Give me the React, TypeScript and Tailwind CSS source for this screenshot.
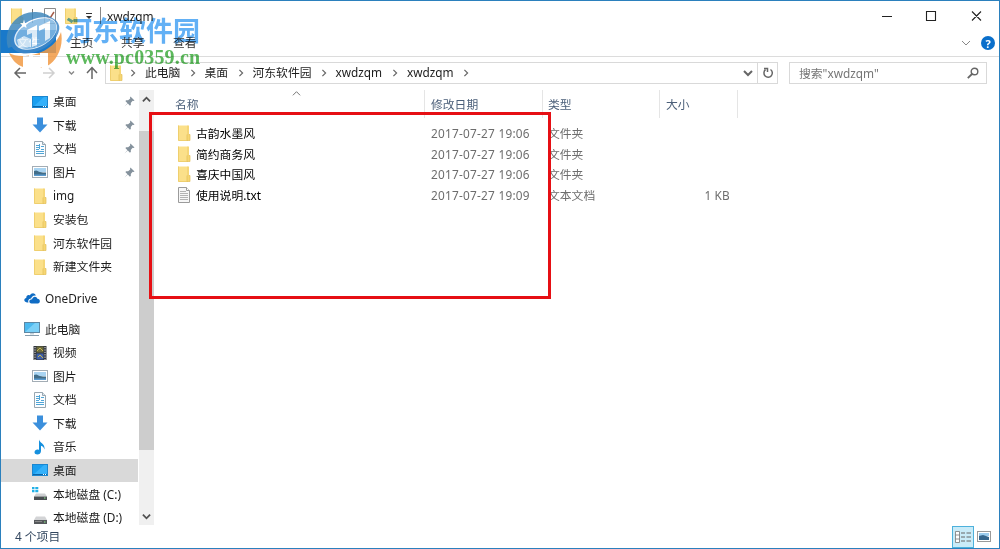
import type { ReactNode } from "react";

type IconName =
  | "desktop"
  | "download"
  | "document"
  | "picture"
  | "folder"
  | "onedrive"
  | "pc"
  | "video"
  | "music"
  | "diskC"
  | "diskD"
  | "text";

const icons: Record<IconName, ReactNode> = {
  desktop: (
    <>
      <rect x="0.5" y="2.5" width="15" height="11" fill="#1a9ff0" stroke="#1c86cf" />
      <path d="M1 13 12 3h3v10z" fill="#35b1fa" />
      <path d="M1 12.5h14" stroke="#0b65a8" />
      <path d="M11 12.5h1m1 0h1" stroke="#fff" />
    </>
  ),
  download: <path d="M5 .5h6v7h4.500L8 15.500.5 7.500H5z" fill="#3b8fdc" />,
  document: (
    <>
      <path d="M2.500.5h8l3 3v12h-11z" fill="#fbfdff" stroke="#98a6b0" />
      <path d="M10.500.5v3h3" fill="#dfe8ee" stroke="#98a6b0" />
      <path d="M4 4.500h3m2 1h3M4 6.500h4M4 8.500h3m2 0h3M4 10.500h8M4 12.500h8M7.500 3v5" stroke="#4fa5d6" />
    </>
  ),
  picture: (
    <>
      <rect x="0.5" y="2.5" width="15" height="11" fill="#fff" stroke="#a3adb5" />
      <path d="M2 4h12v4H2z" fill="#a9d4f2" />
      <path d="M2 7c3-1.500 4 .5 6 1s4 .5 6 .5V11H2z" fill="#426e8a" />
      <path d="M2 10.500h12V12H2z" fill="#5a9bd0" />
    </>
  ),
  folder: (
    <>
      <path d="M2 .5h9.500v15H2z" fill="#fbe08a" />
      <path d="M2.500.5v15h9" fill="none" stroke="#efcf6e" />
      <path d="M11 9.500h3v6h-3z" fill="#f6d673" stroke="#e3bf58" strokeWidth="0.700" />
      <path d="M11 .5h2v9h-2z" fill="#f5d678" />
    </>
  ),
  onedrive: (
    <>
      <path
        d="M4.500 12.500H3C-.5 12-.5 8.500 2.300 8 2 5.500 4.300 4.500 5.800 5.400 7.500 2 11.300 2.800 11.900 5.600 9 5.200 7.500 7 7.200 8.500 5 8.500 3.500 10.500 4.500 12.500z"
        fill="#0f6cc4"
      />
      <path
        d="M7.500 13.500c-3-.3-3-4.200.6-4.200.5-3.200 4.600-3.400 5.300-.5 3.200.2 3.200 4.400.4 4.700z"
        fill="#0f6cc4"
      />
    </>
  ),
  pc: (
    <>
      <rect x="0.5" y="1.500" width="15" height="10" fill="#4cb9ef" stroke="#5d87a3" />
      <path d="M1 11 11 2h4v9z" fill="#7bd0f7" />
      <path d="M6 12h4v1.500H6z" fill="#c3d0d8" />
      <path d="M1 14.500h14" stroke="#879cab" />
    </>
  ),
  video: (
    <>
      <path d="M1.500 1h13v14h-13z" fill="#30343b" />
      <path d="M4.500 1.500h7v6h-7z" fill="#6b6a3e" />
      <path d="M4.500 8.500h7v6h-7z" fill="#4060a8" />
      <path d="M5 6l3-3 3 3M6 12l2-2 3 3" fill="none" stroke="#c8b64f" />
      <path d="M3 2v13M13 2v13" stroke="#e7e9ec" strokeDasharray="1.200 1.200" />
    </>
  ),
  music: (
    <path
      d="M7 .5c.5 3.500 6.300 4 5.500 10-.5-2-1.800-3.500-3.500-3.800V12c0 4.600-6.700 4.400-6.500 1.200.2-2.400 2.700-3.200 4.500-2.200z"
      fill="#1590de"
    />
  ),
  diskC: (
    <>
      <path d="M0 1h2.500v2.300H0zM3.300 1h3v2.300h-3zM0 4h2.500v2.300H0zM3.300 4h3v2.300h-3z" fill="#22b0e6" />
      <path d="M4 7.500h9l2 3H2z" fill="#cdcfd1" />
      <path d="M2 10.500h13v3.500H2z" fill="#4a4e52" />
      <path d="M12 12h1.500" stroke="#8bea8b" />
    </>
  ),
  diskD: (
    <>
      <path d="M4 6.500h9l2 3.500H2z" fill="#d3d4d6" />
      <path d="M2 10h13v4H2z" fill="#55585b" />
      <path d="M3 11.500h7" stroke="#888" />
      <path d="M12 12h1.500" stroke="#8bea8b" />
    </>
  ),
  text: (
    <>
      <path d="M2.500.5h8l3 3v12h-11z" fill="#f7f7f7" stroke="#9b9b9b" />
      <path d="M10.500.5v3h3" fill="#fff" stroke="#9b9b9b" />
      <path d="M4 4.500h6M4 6.500h8M4 8.500h8M4 10.500h8M4 12.500h8" stroke="#b3b3b3" />
    </>
  ),
};

function Icon({ name }: { name: IconName }) {
  return (
    <svg viewBox="0 0 16 16" className="size-4 shrink-0">
      {icons[name]}
    </svg>
  );
}

function Chevron({ className }: { className: string }) {
  return (
    <svg viewBox="0 0 10 10" fill="none" stroke="currentColor" className={className}>
      <path d="M1 3l4 4 4-4" />
    </svg>
  );
}

function Pin() {
  return (
    <svg viewBox="0 0 12 12" className="mr-[3px] size-[11px] text-[#84919c]">
      <path
        d="M7 .5 11.500 5l-1.200.4-.9-.2-2 2.300.1 2-1 1L4.200 8.200.5 11.500 3.800 7.800 1.500 5.500l1-1 2 .1 2.300-2-.2-.9z"
        fill="currentColor"
      />
    </svg>
  );
}

type NavItem = { icon: IconName; label: string; pinned?: boolean; selected?: boolean };

const quickAccess: NavItem[] = [
  { icon: "desktop", label: "桌面", pinned: true },
  { icon: "download", label: "下载", pinned: true },
  { icon: "document", label: "文档", pinned: true },
  { icon: "picture", label: "图片", pinned: true },
  { icon: "folder", label: "img" },
  { icon: "folder", label: "安装包" },
  { icon: "folder", label: "河东软件园" },
  { icon: "folder", label: "新建文件夹" },
];

const thisPc: NavItem[] = [
  { icon: "video", label: "视频" },
  { icon: "picture", label: "图片" },
  { icon: "document", label: "文档" },
  { icon: "download", label: "下载" },
  { icon: "music", label: "音乐" },
  { icon: "desktop", label: "桌面", selected: true },
  { icon: "diskC", label: "本地磁盘 (C:)" },
  { icon: "diskD", label: "本地磁盘 (D:)" },
];

const files: { icon: IconName; name: string; date: string; type: string; size: string }[] = [
  { icon: "folder", name: "古韵水墨风", date: "2017-07-27 19:06", type: "文件夹", size: "" },
  { icon: "folder", name: "简约商务风", date: "2017-07-27 19:06", type: "文件夹", size: "" },
  { icon: "folder", name: "喜庆中国风", date: "2017-07-27 19:06", type: "文件夹", size: "" },
  { icon: "text", name: "使用说明.txt", date: "2017-07-27 19:09", type: "文本文档", size: "1 KB" },
];

const crumbs = [
  { label: "此电脑", width: "w-[59.500px]" },
  { label: "桌面", width: "w-[48px]" },
  { label: "河东软件园", width: "w-[83px]" },
  { label: "xwdzqm", width: "w-[71.500px]" },
  { label: "xwdzqm", width: "w-[71px]" },
];

function NavRow({ item, root }: { item: NavItem; root?: boolean }) {
  return (
    <div
      className={`flex h-[23.550px] shrink-0 items-center gap-[5px] ${root ? "pl-[23px]" : "pl-[31px]"} ${
        item.selected ? "bg-[#d9d9d9]" : ""
      }`}
    >
      <Icon name={item.icon} />
      <span className="mb-px flex-1 whitespace-nowrap">{item.label}</span>
      {item.pinned && <Pin />}
    </div>
  );
}

function TitleBar() {
  return (
    <div className="flex h-[29px] items-center">
      <div className="flex flex-1 items-center pl-[8px]">
        <Icon name="folder" />
        <span className="ml-[7px] h-[14px] w-px bg-[#777]" />
        <svg viewBox="0 0 16 16" fill="none" className="ml-[9px] size-4">
          <path d="M2.500.5h11v15h-11z" fill="#fff" stroke="#8a8a8a" />
          <path d="M5 8l2.500 3L12 4" stroke="#a65d4a" strokeWidth="1.500" />
        </svg>
        <span className="ml-[5px] flex">
          <Icon name="folder" />
        </span>
        <svg viewBox="0 0 8 8" className="ml-[6px] size-2 text-[#333]">
          <path d="M1 1.500h6" stroke="currentColor" />
          <path d="M1 4h6L4 7z" fill="currentColor" />
        </svg>
        <span className="ml-[7px] h-[17px] w-px bg-[#888]" />
        <span className="ml-[6px]">xwdzqm</span>
      </div>
      <svg viewBox="0 0 100 12" fill="none" stroke="#222" strokeWidth="1.100" className="mr-[17px] h-3 w-[100px]">
        <path d="M0 6.500h10M44.500 1.500h9v9h-9zM90 1.500l9 9M99 1.500l-9 9" />
      </svg>
    </div>
  );
}

function Ribbon() {
  return (
    <div className="flex h-[27px] items-center border-b border-[#dcdcdc] text-[#333]">
      <div className="flex h-[23px] w-[55px] items-center justify-center self-start bg-[#1979ca] text-white">
        文件
      </div>
      <span className="mb-[2px] ml-[14px] w-[51px]">主页</span>
      <span className="mb-[2px] w-[52px]">共享</span>
      <span className="mb-[2px] flex-1">查看</span>
      <Chevron className="mr-[10px] size-[10px] text-[#888]" />
      <span className="mr-[4px] flex size-[14px] items-center justify-center rounded-full bg-[#0a6fcb] text-[11px] font-bold leading-none text-white">
        ?
      </span>
    </div>
  );
}

function AddressBar() {
  return (
    <div className="flex h-[33px] items-center pb-px">
      <svg viewBox="0 0 90 16" fill="none" className="ml-[12px] h-4 w-[90px]">
        <path d="M2 8h11M7 3 2 8l5 5" stroke="#666" strokeWidth="1.500" />
        <path d="M30 8h11m-5-5 5 5-5 5" stroke="#d0d0d0" strokeWidth="1.500" />
        <path d="m56 6.500 2.500 2.500L61 6.500" stroke="#888" strokeWidth="1.400" />
        <path d="M79 14V3m-5 5 5-5.500L84 8" stroke="#666" strokeWidth="1.500" />
      </svg>
      <div className="ml-[2px] flex h-[22px] w-[673px] items-center border border-[#d9d9d9]">
        <span className="ml-[2px] flex w-[20px]">
          <Icon name="folder" />
        </span>
        <Chevron className="mr-[8px] ml-px size-[8px] -rotate-90 stroke-[1.500] text-[#666]" />
        {crumbs.map((c, i) => (
          <span key={i} className={`flex shrink-0 items-center justify-between ${c.width}`}>
            <span className="mb-[2px]">{c.label}</span>
            <Chevron className="mr-[8px] size-[8px] -rotate-90 stroke-[1.500] text-[#666]" />
          </span>
        ))}
        <span className="flex-1" />
        <Chevron className="mr-[4px] size-[10px] stroke-2 text-[#666]" />
        <span className="flex h-full w-[20px] items-center justify-center border-l border-[#d9d9d9]">
          <svg viewBox="0 0 12 12" fill="none" stroke="#666" strokeWidth="1.500" className="size-3">
            <path d="M8.500 2.500a4.200 4.200 0 1 1-5 .2M2 1.500h3.500V5" />
          </svg>
        </span>
      </div>
      <div className="ml-[11px] flex h-[22px] w-[198px] items-center justify-between border border-[#d9d9d9] pr-[7px] pl-[9px] text-[#767676]">
        <span className="mb-px">搜索"xwdzqm"</span>
        <svg viewBox="0 0 12 12" fill="none" stroke="#666" strokeWidth="1.400" className="size-3">
          <circle cx="7.500" cy="4.500" r="3.300" />
          <path d="M5 7 .8 11.200" strokeWidth="1.800" />
        </svg>
      </div>
    </div>
  );
}

function Sidebar() {
  return (
    <div className="flex h-[435px] w-[153px] overflow-hidden">
      <div className="flex w-[137px] shrink-0 flex-col">
        {quickAccess.map((item) => (
          <NavRow key={item.label} item={item} />
        ))}
        <div className="mt-[8px]">
          <NavRow item={{ icon: "onedrive", label: "OneDrive" }} root />
        </div>
        <div className="mt-[7.500px]">
          <NavRow item={{ icon: "pc", label: "此电脑" }} root />
        </div>
        {thisPc.map((item) => (
          <NavRow key={item.label} item={item} />
        ))}
      </div>
      <div className="ml-px flex w-[15px] flex-col items-center bg-[#f0f0f0]">
        <Chevron className="mt-[5px] size-[9px] rotate-180 stroke-2 text-[#505050]" />
        <div className="mt-[27px] h-[319px] w-full bg-[#cdcdcd]" />
        <Chevron className="mt-auto mb-[4px] size-[9px] stroke-2 text-[#505050]" />
      </div>
    </div>
  );
}

function FileList() {
  return (
    <div className="flex-1">
      <div className="flex h-[28px] text-[#4c607a]">
        <div className="relative flex w-[271px] items-center border-r border-[#e5e5e5] pl-[21px]">
          名称
          <Chevron className="absolute top-[-1px] left-[138px] size-[9px] rotate-180 text-[#666]" />
        </div>
        <div className="flex w-[118px] items-center border-r border-[#e5e5e5] pl-[6px]">修改日期</div>
        <div className="flex w-[117px] items-center border-r border-[#e5e5e5] pl-[5px]">类型</div>
        <div className="flex w-[78px] items-center border-r border-[#e5e5e5] pl-[6px]">大小</div>
      </div>
      <div className="pt-[5px]">
        {files.map((f) => (
          <div key={f.name} className="flex h-[20.600px] items-center text-[#6d6d6d]">
            <div className="flex w-[277px] items-center gap-[4px] pl-[22px] text-black">
              <Icon name={f.icon} />
              {f.name}
            </div>
            <div className="w-[117px] whitespace-nowrap tracking-[0.250px]">{f.date}</div>
            <div className="w-[117px]">{f.type}</div>
            <div className="w-[65px] text-right tracking-[0.200px]">{f.size}</div>
          </div>
        ))}
      </div>
    </div>
  );
}

function StatusBar() {
  return (
    <div className="flex h-[23px] items-center pl-[14px] text-[#33475f]">
      <span className="mb-[2px] flex-1">4 个项目</span>
      <div className="flex h-[22px] w-[22px] items-center justify-center border border-[#4db1dc] bg-[#c9ebf8]">
        <svg viewBox="0 0 16 14" fill="none" className="h-[14px] w-4">
          <path d="M.5 1.500h4v11h-4zM.5 5h4M.5 9h4" fill="#fff" stroke="#777" strokeWidth="0.800" />
          <path d="M6 3h4m1.500 0H16M6 7h4m1.500 0H16M6 11h4m1.500 0H16" stroke="#666" />
        </svg>
      </div>
      <svg viewBox="0 0 14 11" className="mr-[8px] ml-[3px] h-[11px] w-[14px]">
        <rect x="0.500" y="0.500" width="13" height="10" fill="#fff" stroke="#9a9a9a" />
        <path d="M2 2h10v3H2z" fill="#9bcbed" />
        <path d="M2 5l4-1 6 2v3H2z" fill="#35658c" />
      </svg>
    </div>
  );
}

function WatermarkLogo() {
  return (
    <svg viewBox="0 0 58 58" className="pointer-events-none absolute top-[9px] left-[4px] size-[58px] opacity-85">
      {/* lower bowl, the gaps are the legs of the building */}
      <path
        d="M4 43c8 5 26 4 38-4 7-4 12-11 14-17 3 14-4 29-14 34V43l-5 3v12h-2V45h-8v12h-2V46h-7v11C12 55 7 50 4 43z"
        fill="#f29b45"
      />
      <path d="M24 45h4v12h-4zM35 43h8v13l-8 2z" fill="#fff" />
      <path d="M3 38C-3 18 13 1 31 2c7 0 13 3 17 7C33 8 17 17 10 36z" fill="#4189bd" />
      {/* tilted ring */}
      <ellipse cx="30" cy="25" rx="26" ry="16" transform="rotate(-27 30 25)" fill="#3f88c8" />
      <ellipse cx="30.500" cy="23.500" rx="23" ry="14" transform="rotate(-27 30.500 23.500)" fill="#fff" />
      <ellipse cx="31" cy="23.500" rx="22" ry="13" transform="rotate(-27 31 23.500)" fill="#82b8e3" />
      <path d="M12 30 19 26l7 3v8l-12 1z" fill="#fff" fillOpacity="0.850" />
      <path d="M22 20 32 15v20l-5 2V23l-5 2zM34 16 45 11v17l-5 3V18l-6 3z" fill="#fff" />
      <path d="m19 9.500 1 3.500h3l-2 2 .5 3-2.500-1.500-2.500 1.500.5-3-2-2h3z" fill="#fff" />
    </svg>
  );
}

function WatermarkText() {
  return (
    <div className="pointer-events-none absolute top-[14px] left-[64px] whitespace-nowrap mix-blend-multiply">
      <div className="font-['Noto_Sans_CJK_SC',sans-serif] text-[27px] leading-[29px] font-bold text-[#62b0f5]">
        河东软件园
      </div>
      <div className="mt-[2px] ml-px font-['Liberation_Serif',serif] text-[20px] leading-[22px] font-bold tracking-[0.150px] text-[#5cb95c]">
        www.pc0359.cn
      </div>
    </div>
  );
}

export default function App() {
  return (
    <div className="relative h-[549px] w-[1000px] overflow-hidden border border-[#2b80bd] bg-white font-['Noto_Sans','Noto_Sans_CJK_SC',sans-serif] text-[11.800px] leading-4 text-[#1c1c1c]">
      <TitleBar />
      <Ribbon />
      <AddressBar />
      <div className="flex h-[435px]">
        <Sidebar />
        <FileList />
      </div>
      <StatusBar />
      <WatermarkLogo />
      <WatermarkText />
      {/* highlight around the extracted files */}
      <div className="pointer-events-none absolute top-[111px] left-[148px] h-[187px] w-[402px] border-3 border-[#e60f14]" />
    </div>
  );
}
